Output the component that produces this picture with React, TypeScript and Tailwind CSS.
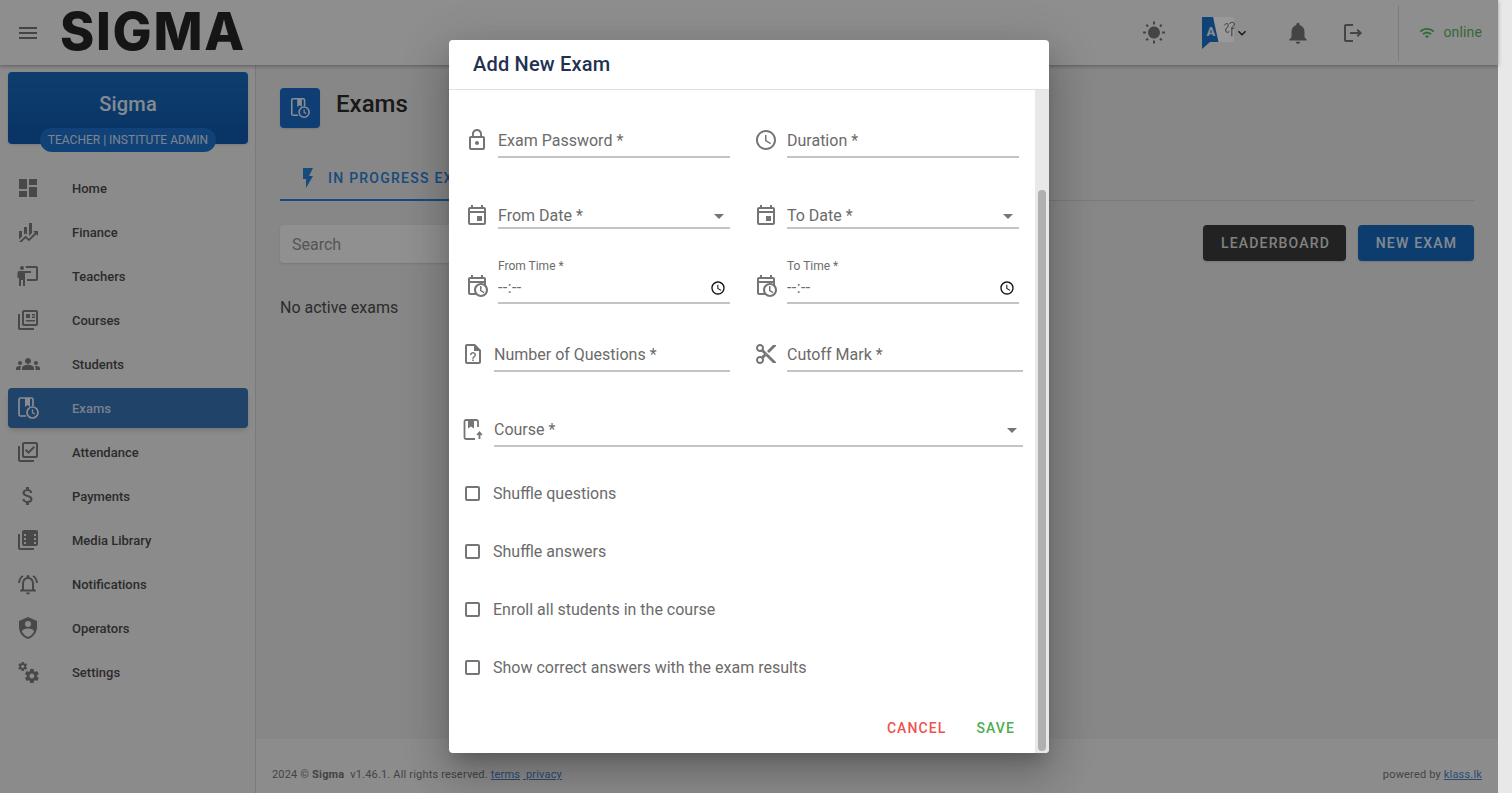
import React from 'react';
import {
  MdMenu, MdDashboard, MdGroups, MdOutlineLibraryAddCheck, MdAttachMoney, MdOutlineNotificationsActive,
  MdLockOutline, MdOutlineSchedule, MdOutlineEvent, MdContentCut, MdArrowDropDown, MdOutlineAccessTime,
  MdFlashOn, MdWbSunny, MdNotifications, MdOutlineLogout, MdWifi, MdKeyboardArrowDown,
} from 'react-icons/md';

const Mdi = ({ d, size = 24, className = '' }: { d: string; size?: number; className?: string }) => (
  <svg width={size} height={size} viewBox="0 0 24 24" fill="currentColor" className={className}><path d={d} /></svg>
);

const ExamIcon = ({ size = 24 }: { size?: number }) => (
  <svg width={size} height={size} viewBox="0 0 24 24" fill="none" stroke="currentColor" strokeWidth="1.7">
    <path d="M10 20H4.500a1.500 1.500 0 0 1-1.500-1.500v-15A1.500 1.500 0 0 1 4.500 2h11a1.500 1.500 0 0 1 1.500 1.500V10" />
    <path d="M9 2v9l2.500-2 2.500 2V2" fill="currentColor" stroke="none" />
    <circle cx="16.500" cy="16.500" r="5.500" />
    <path d="M16.500 13.500v3.300l2.300 1.200" strokeWidth="1.300" />
  </svg>
);

const CourseIcon = () => (
  <svg width="24" height="24" viewBox="0 0 24 24" fill="none" stroke="currentColor" strokeWidth="1.800">
    <path d="M17 10V4.500A1.500 1.500 0 0 0 15.500 3H5a1.500 1.500 0 0 0-1.500 1.500v16A1.500 1.500 0 0 0 5 22h9" />
    <path d="M7 3v8.500l3-2 3 2V3z" fill="currentColor" stroke="none" />
    <path d="M18.500 22v-6M16.200 18l2.300-2.600 2.300 2.600" />
  </svg>
);

const financePath = 'M6,16.5L3,19.44V11H6M11,14.66L9.43,13.32L8,14.64V7H11M16,13L13,16V3H16M18.81,12.81L17,11H22V16L20.21,14.21L13,21.36L9.53,18.34L5.75,22H3L9.47,15.66L13,18.64';
const teacherPath = 'M20,17A2,2 0 0,0 22,15V4A2,2 0 0,0 20,2H9.46C9.81,2.61 10,3.3 10,4H20V15H11V17M15,7V9H9V22H7V16H5V22H3V14H1.5V9A2,2 0 0,1 3.5,7H15M8,4A2,2 0 0,1 6,6A2,2 0 0,1 4,4A2,2 0 0,1 6,2A2,2 0 0,1 8,4Z';
const coursesPath = 'M4 6H2v14a2 2 0 0 0 2 2h14v-2H4V6zm16-4H8a2 2 0 0 0-2 2v12a2 2 0 0 0 2 2h12a2 2 0 0 0 2-2V4a2 2 0 0 0-2-2zm0 14H8V4h12v12zM10 6h4v4h-4V6zm6 0h3v1.500h-3V6zm0 2.500h3V10h-3V8.500zM10 12h9v1.500h-9V12z';
const mediaPath = 'M4 6H2v14a2 2 0 0 0 2 2h14v-2H4V6zm16-4H8a2 2 0 0 0-2 2v12a2 2 0 0 0 2 2h12a2 2 0 0 0 2-2V4a2 2 0 0 0-2-2zM10 16H8v-2h2v2zm0-4H8v-2h2v2zm0-4H8V6h2v2zm10 8h-2v-2h2v2zm0-4h-2v-2h2v2zm0-4h-2V6h2v2z';
const shieldPath = 'M12,1L3,5V11C3,16.55 6.84,21.74 12,23C17.16,21.74 21,16.55 21,11V5L12,1M12,5A3,3 0 0,1 15,8A3,3 0 0,1 12,11A3,3 0 0,1 9,8A3,3 0 0,1 12,5M17.13,17C15.92,18.85 14.11,20.24 12,20.92C9.89,20.24 8.08,18.85 6.87,17C6.53,16.5 6.24,16 6,15.47C6,13.82 8.71,12.47 12,12.47C15.29,12.47 18,13.79 18,15.47C17.76,16 17.47,16.5 17.13,17Z';
const cogsPath = 'M15.9,18.45C17.25,18.45 18.35,17.35 18.35,16C18.35,14.65 17.25,13.55 15.9,13.55C14.54,13.55 13.45,14.65 13.45,16C13.45,17.35 14.54,18.45 15.9,18.45M21.1,16.68L22.58,17.84C22.71,17.95 22.75,18.13 22.66,18.29L21.26,20.71C21.17,20.86 21,20.92 20.83,20.86L19.09,20.16C18.73,20.44 18.34,20.67 17.91,20.85L17.64,22.7C17.62,22.87 17.47,23 17.3,23H14.5C14.32,23 14.18,22.87 14.15,22.7L13.89,20.85C13.46,20.67 13.07,20.44 12.71,20.16L10.96,20.86C10.81,20.92 10.62,20.86 10.54,20.71L9.14,18.29C9.05,18.13 9.09,17.95 9.22,17.84L10.7,16.68L10.65,16L10.7,15.31L9.22,14.16C9.09,14.05 9.05,13.86 9.14,13.71L10.54,11.29C10.62,11.13 10.81,11.07 10.96,11.13L12.71,11.84C13.07,11.56 13.46,11.32 13.89,11.15L14.15,9.29C14.18,9.13 14.32,9 14.5,9H17.3C17.47,9 17.62,9.13 17.64,9.29L17.91,11.15C18.34,11.32 18.73,11.56 19.09,11.84L20.83,11.13C21,11.07 21.17,11.13 21.26,11.29L22.66,13.71C22.75,13.86 22.71,14.05 22.58,14.16L21.1,15.31L21.15,16L21.1,16.68M6.69,8.07C7.56,8.07 8.26,7.37 8.26,6.5C8.26,5.63 7.56,4.92 6.69,4.92A1.58,1.58 0 0,0 5.11,6.5C5.11,7.37 5.82,8.07 6.69,8.07M10.03,6.94L11,7.68C11.07,7.75 11.09,7.87 11.03,7.97L10.13,9.53C10.08,9.63 9.96,9.67 9.86,9.63L8.74,9.18L8,9.62L7.81,10.81C7.79,10.92 7.7,11 7.59,11H5.79C5.67,11 5.58,10.92 5.56,10.81L5.4,9.62L4.64,9.18L3.5,9.63C3.41,9.67 3.3,9.63 3.24,9.53L2.34,7.97C2.28,7.87 2.31,7.75 2.39,7.68L3.34,6.94L3.31,6.5L3.34,6.06L2.39,5.32C2.31,5.25 2.28,5.13 2.34,5.03L3.24,3.47C3.3,3.37 3.41,3.33 3.5,3.37L4.63,3.82L5.4,3.38L5.56,2.19C5.58,2.08 5.67,2 5.79,2H7.59C7.7,2 7.79,2.08 7.81,2.19L7.97,3.38L8.74,3.82L9.86,3.37C9.96,3.33 10.08,3.37 10.13,3.47L11.03,5.03C11.09,5.13 11.07,5.25 11,5.32L10.03,6.06L10.06,6.5L10.03,6.94Z';
const calClockPath = 'M6 1V3H5C3.89 3 3 3.89 3 5V19C3 20.1 3.89 21 5 21H11.1C12.36 22.24 14.09 23 16 23C19.87 23 23 19.87 23 16C23 14.09 22.24 12.36 21 11.1V5C21 3.9 20.1 3 19 3H18V1H16V3H8V1H6M5 5H19V7H5V5M5 9H19V9.67C18.09 9.24 17.07 9 16 9C12.13 9 9 12.13 9 16C9 17.07 9.24 18.09 9.67 19H5V9M16 11.1C18.71 11.1 20.9 13.29 20.9 16C20.9 18.71 18.71 20.9 16 20.9C13.29 20.9 11.1 18.71 11.1 16C11.1 13.29 13.29 11.1 16 11.1M15 12V17L18.61 19.16L19.36 17.94L16.5 16.25V12H15Z';
const fileQPath = 'M14 2H6C4.9 2 4 2.9 4 4V20C4 21.1 4.9 22 6 22H18C19.1 22 20 21.1 20 20V8L14 2M18 20H6V4H13V9H18V20M15 13C15 14.89 12.75 15.07 12.75 16.76H11.25C11.25 14.32 13.5 14.5 13.5 13C13.5 12.18 12.83 11.5 12 11.5S10.5 12.18 10.5 13H9C9 11.35 10.34 10 12 10S15 11.35 15 13M12.75 17.5V19H11.25V17.5H12.75Z';

const navItems = [
  { label: 'Home', icon: <MdDashboard size={24} /> },
  { label: 'Finance', icon: <Mdi d={financePath} /> },
  { label: 'Teachers', icon: <Mdi d={teacherPath} /> },
  { label: 'Courses', icon: <Mdi d={coursesPath} /> },
  { label: 'Students', icon: <MdGroups size={26} /> },
  { label: 'Exams', icon: <ExamIcon />, active: true },
  { label: 'Attendance', icon: <MdOutlineLibraryAddCheck size={24} /> },
  { label: 'Payments', icon: <MdAttachMoney size={24} /> },
  { label: 'Media Library', icon: <Mdi d={mediaPath} /> },
  { label: 'Notifications', icon: <MdOutlineNotificationsActive size={25} /> },
  { label: 'Operators', icon: <Mdi d={shieldPath} /> },
  { label: 'Settings', icon: <Mdi d={cogsPath} /> },
];

const Field = ({ label, icon, className = '', select, low }: { label: string; icon: React.ReactNode; className?: string; select?: boolean; low?: boolean }) => (
  <div className={`flex items-end ${className}`}>
    <div className={`mr-[9px] w-6 shrink-0 text-[#757575] ${low ? 'mb-[2px]' : 'mb-[6px]'}`}>{icon}</div>
    <div className={`flex h-[34px] flex-1 items-center justify-between border-b-2 border-[#c4c4c4] text-[16px] text-[#6b6b6b] ${low ? 'pt-[10px]' : 'pt-[2px]'}`}>
      <span>{label}</span>
      {select && <MdArrowDropDown size={24} className="-mr-[1px] text-[#757575]" />}
    </div>
  </div>
);

const TimeField = ({ label }: { label: string }) => (
  <div className="flex flex-1 items-end">
    <div className="mr-[9px] mb-[6px] w-6 shrink-0 text-[#757575]"><Mdi d={calClockPath} /></div>
    <div className="flex-1 border-b-2 border-[#c4c4c4]">
      <div className="h-[17px] text-[12px] leading-[17px] text-[#6b6b6b]">{label}</div>
      <div className="flex h-[27px] items-center justify-between pr-[4px] pb-[2px] text-[16px] tracking-[0.4px] text-[#6b6b6b]">
        <span>--:--</span>
        <MdOutlineAccessTime size={16} className="text-[#111]" />
      </div>
    </div>
  </div>
);

const Check = ({ label }: { label: string }) => (
  <div className="flex h-[58px] items-center">
    <div className="h-[15px] w-[15px] rounded-[2px] border-2 border-[#757575]" />
    <span className="ml-[13px] pt-[2px] text-[16px] text-[#6b6b6b]">{label}</span>
  </div>
);

export default function App() {
  return (
    <div className="relative flex h-[793px] w-[1512px] overflow-hidden bg-[#e8e8e8] font-['Roboto',sans-serif]">
      <div className="relative flex h-full w-[1498px] flex-col bg-[#e2e2e2]">
        {/* top bar */}
        <header className="z-10 flex h-[65px] shrink-0 items-center bg-[#ededed] pr-[16px] shadow-[0_1px_4px_rgba(0,0,0,0.35)]">
          <MdMenu size={24} className="ml-[16px] text-[#727272]" />
          <span className="ml-[20px] -mt-[1px] text-[52px] leading-none font-extrabold tracking-[1.7px] text-[#242424] font-['Inter',sans-serif]">SIGMA</span>
          <div className="ml-auto flex items-center">
            <MdWbSunny size={24} className="text-[#727272]" />
            <div className="relative ml-[36px] h-[32px] w-[32px]">
              <div className="absolute top-0 right-0 h-[25px] w-[20px] rounded-r-[2px] bg-white">
                <svg width="16" height="18" viewBox="0 0 13 14" fill="none" stroke="#555" strokeWidth="0.800" className="absolute top-[3px] left-[8px]"><path d="M2 4c1-2 3-2 3 0s-2 2-2 4 2 2 3 1M6 3c1-2 4-2 4 0s-2 2-2 3 1 1 2 0M8 6v7" /></svg>
              </div>
              <svg width="17" height="32" viewBox="0 0 17 32" className="absolute top-0 left-0 text-[#1a70c4]"><path d="M0 0H11L16.500 25H8L0 32Z" fill="currentColor" /></svg>
              <span className="absolute top-[8px] left-[4px] text-[13px] leading-none font-bold text-[#e8eef6]">A</span>
            </div>
            <MdKeyboardArrowDown size={16} className="text-[#222]" />
            <MdNotifications size={26} className="ml-[35px] text-[#727272]" />
            <MdOutlineLogout size={24} className="ml-[30px] text-[#727272]" />
            <div className="ml-[33px] h-[56px] w-px bg-[#cfcfcf]" />
            <MdWifi size={16} className="ml-[20px] text-[#55b05b]" />
            <span className="ml-[8px] text-[14px] tracking-[0.15px] text-[#55b05b]">online</span>
          </div>
        </header>

        <div className="flex min-h-0 flex-1">
          {/* sidebar */}
          <aside className="flex w-[256px] shrink-0 flex-col border-r border-[#cbcbcb] bg-[#e8e8e8] pt-[7px] pr-[7px] pl-[8px]">
            <div className="relative h-[72px] rounded-[4px] bg-gradient-to-b from-[#1868b8] to-[#0e56a8] pt-[20px] text-center text-[20px] leading-[24px] font-medium tracking-[0.2px] text-[#dde6f0] shadow">
              Sigma
              <div className="absolute top-[56px] left-[32px] flex h-[24px] w-[176px] items-center justify-center rounded-full bg-[#1b6fc8] text-[12px] font-normal tracking-normal text-[#d0dcec]">TEACHER | INSTITUTE ADMIN</div>
            </div>
            <nav className="mt-[22px] flex flex-col">
              {navItems.map((item) => (
                <div key={item.label} className={`flex items-center rounded-[4px] pl-[8px] ${item.active ? 'my-[2px] h-[40px] bg-[#3470b0] text-[#e4ebf4] shadow-md' : 'h-[44px] text-[#787878]'}`}>
                  <div className="flex w-[24px] justify-center">{item.icon}</div>
                  <span className={`ml-[32px] pt-[1px] text-[13px] font-medium ${item.active ? 'text-[#c8d8ea]' : 'text-[#4a4a4a]'}`}>{item.label}</span>
                </div>
              ))}
            </nav>
          </aside>

          {/* main */}
          <main className="flex min-w-0 flex-1 flex-col">
            <div className="flex-1 px-[24px] pt-[23px]">
              <div className="flex items-start">
                <div className="flex h-[40px] w-[40px] items-center justify-center rounded-[4px] bg-[#1868c0] text-[#e4ebf4] shadow"><ExamIcon size={22} /></div>
                <h1 className="ml-[16px] text-[24px] leading-[32px] font-medium text-[#2b2b2b]">Exams</h1>
              </div>
              <div className="mt-[25px] flex h-[48px] border-b border-[#cbcbcb]">
                <div className="flex h-[48px] w-[300px] items-center border-b-2 border-[#2a7ccf] pt-[4px] pl-[16px] text-[14px] font-medium tracking-[1.25px] whitespace-nowrap text-[#2a7ccf]">
                  <MdFlashOn size={24} />
                  <span className="ml-[8px]">IN PROGRESS EXAMS</span>
                </div>
              </div>
              <div className="mt-[24px] flex items-start justify-between">
                <div className="flex h-[38px] w-[300px] items-center rounded-[4px] bg-[#f0f0f0] px-[12px] pt-[2px] text-[16px] text-[#8e8e8e] shadow">Search</div>
                <div className="flex gap-[12px]">
                  <button className="h-[36px] w-[143px] rounded-[4px] bg-[#3a3a3a] pt-[1px] pl-[2px] text-[14px] font-medium tracking-[1.15px] text-[#d8d8d8] shadow">LEADERBOARD</button>
                  <button className="h-[36px] w-[116px] rounded-[4px] bg-[#1766b8] pt-[1px] pl-[1px] text-[14px] font-medium tracking-[1.2px] text-[#dbe5f2] shadow">NEW EXAM</button>
                </div>
              </div>
              <p className="mt-[33px] text-[16px] text-[#4a4a4a]">No active exams</p>
            </div>
            <footer className="flex h-[54px] items-center justify-between bg-[#e9e9e9] pt-[19px] pr-[16px] pl-[16px] text-[11px] tracking-[0.18px] text-[#727272]">
              <div>2024 © <b className="font-bold">Sigma</b>&nbsp; v1.46.1. All rights reserved. <span className="text-[#467fc4] underline">terms</span> <span className="text-[#467fc4] underline">&nbsp;privacy</span></div>
              <div>powered by <span className="text-[#467fc4] underline">klass.lk</span></div>
            </footer>
          </main>
        </div>

        {/* dialog overlay */}
        <div className="absolute inset-0 z-20 bg-black/40" />
        <div className="absolute top-[40px] left-[449px] z-30 flex h-[713px] w-[600px] flex-col overflow-hidden rounded-[4px] bg-white shadow-[0_11px_15px_-7px_rgba(0,0,0,0.2),0_24px_38px_3px_rgba(0,0,0,0.14),0_9px_46px_8px_rgba(0,0,0,0.12)]">
          <div className="flex h-[50px] shrink-0 items-center border-b border-[#e0e0e0] pb-[2px] pl-[24px] text-[20px] font-medium tracking-[0.2px] text-[#1f3251]">Add New Exam</div>
          <div className="flex min-h-0 flex-1">
            <div className="flex w-[586px] flex-col">
              <div className="flex gap-[24px] pt-[34px] pr-[16px] pl-[16px]">
                <Field className="flex-1" label="Exam Password *" icon={<MdLockOutline size={24} />} />
                <Field className="flex-1" label="Duration *" icon={<MdOutlineSchedule size={24} />} />
              </div>
              <div className="mt-[37px] flex gap-[24px] pr-[16px] pl-[16px]">
                <Field className="flex-1" label="From Date *" icon={<MdOutlineEvent size={24} />} select low />
                <Field className="flex-1" label="To Date *" icon={<MdOutlineEvent size={24} />} select low />
              </div>
              <div className="mt-[29px] flex gap-[24px] pr-[16px] pl-[16px]">
                <TimeField label="From Time *" />
                <TimeField label="To Time *" />
              </div>
              <div className="mt-[34px] flex gap-[24px] pr-[12px] pl-[12px]">
                <Field className="w-[269px]" label="Number of Questions *" icon={<Mdi d={fileQPath} />} />
                <Field className="flex-1" label="Cutoff Mark *" icon={<MdContentCut size={24} />} />
              </div>
              <Field className="mt-[41px] pr-[12px] pl-[12px]" label="Course *" icon={<CourseIcon />} select />
              <div className="mt-[17px] flex flex-col pl-[16px]">
                <Check label="Shuffle questions" />
                <Check label="Shuffle answers" />
                <Check label="Enroll all students in the course" />
                <Check label="Show correct answers with the exam results" />
              </div>
              <div className="mt-[22px] flex justify-end gap-[30px] pr-[20px] text-[14px] font-medium tracking-[1.1px]">
                <span className="text-[#ef5350]">CANCEL</span>
                <span className="text-[#4caf50]">SAVE</span>
              </div>
            </div>
            <div className="flex w-[14px] flex-col bg-[#e8e8e8] px-[3px] pt-[100px] pb-[2px]">
              <div className="flex-1 rounded-full bg-[#b0b0b0]" />
            </div>
          </div>
        </div>
      </div>
    </div>
  );
}
